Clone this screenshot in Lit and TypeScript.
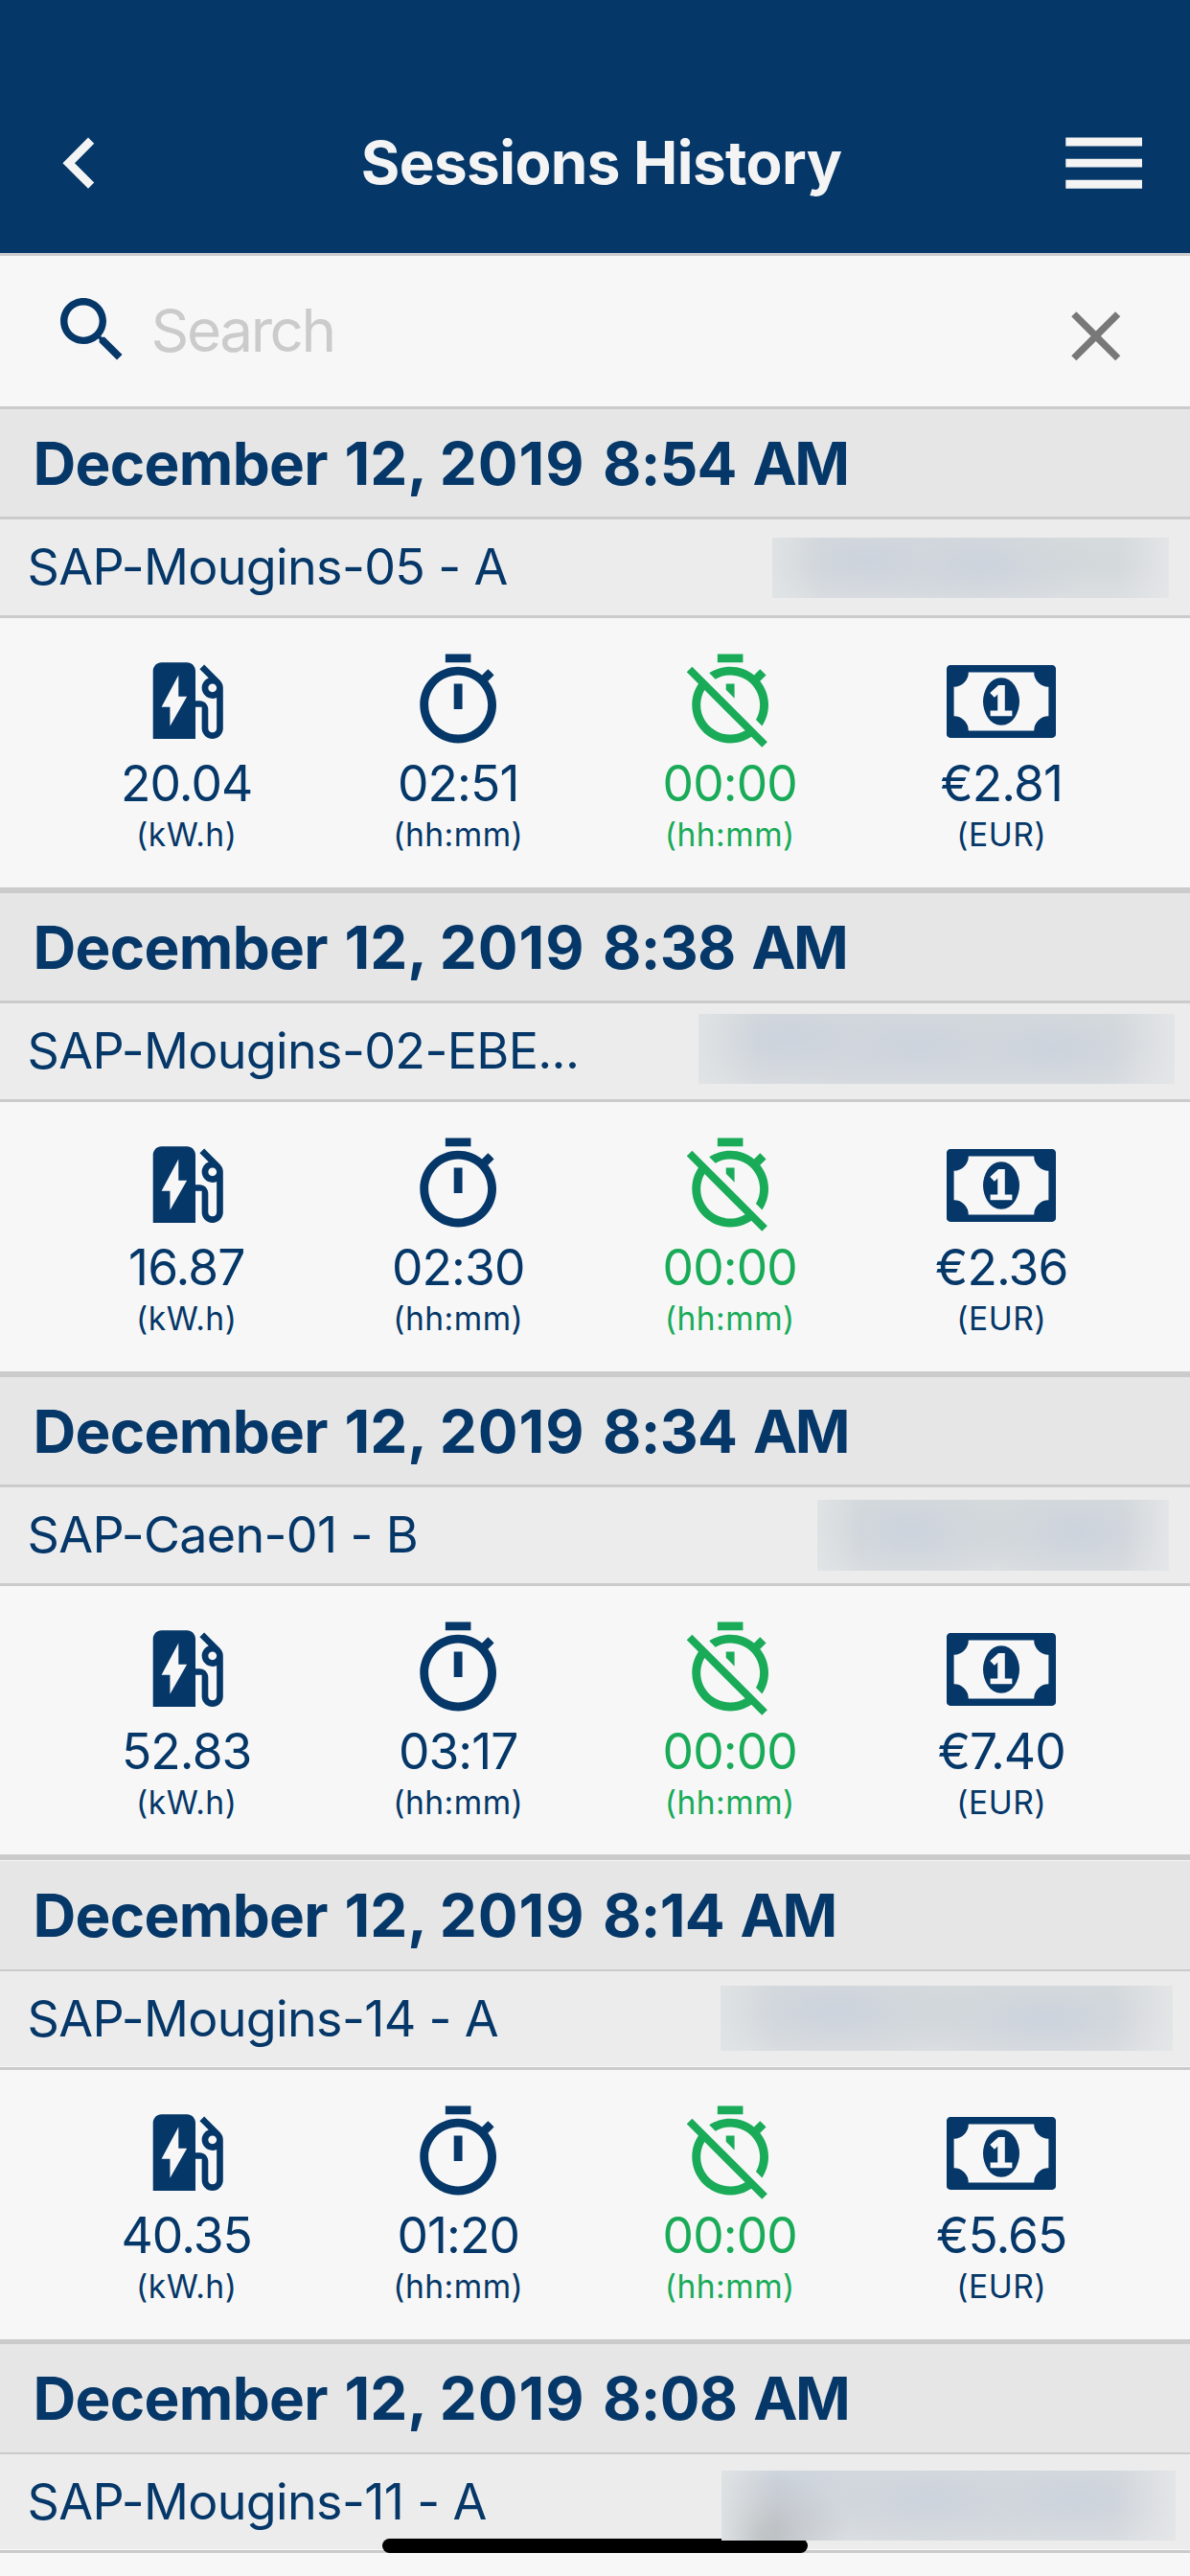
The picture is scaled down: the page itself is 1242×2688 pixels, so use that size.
import { LitElement, html, css, svg } from "lit";
import { customElement, property } from "lit/decorators.js";
import { classMap } from "lit/directives/class-map.js";
import { styleMap } from "lit/directives/style-map.js";

const ICONS = {
  back: "M15.41 7.41L14 6l-6 6 6 6 1.41-1.41L10.83 12z",
  menu: "M3 18h18v-2H3v2zm0-5h18v-2H3v2zm0-7v2h18V6H3z",
  search:
    "M15.5 14h-.79l-.28-.27C15.41 12.59 16 11.11 16 9.5 16 5.91 13.09 3 9.5 3S3 5.91 3 9.5 5.91 16 9.5 16c1.61 0 3.09-.59 4.23-1.57l.27.28v.79l5 4.99L20.49 19l-4.99-5zm-6 0C7.01 14 5 11.99 5 9.5S7.01 5 9.5 5 14 7.01 14 9.5 11.99 14 9.5 14z",
  close:
    "M19 6.41L17.59 5 12 10.59 6.41 5 5 6.41 10.59 12 5 17.59 6.41 19 12 13.41 17.59 19 19 17.59 13.41 12z",
  energy:
    "M19.77 7.23l.01-.01-3.72-3.72L15 4.56l2.11 2.11c-.94.36-1.61 1.26-1.61 2.33 0 1.38 1.12 2.5 2.5 2.5.36 0 .69-.08 1-.21v7.21c0 .55-.45 1-1 1s-1-.45-1-1V14c0-1.1-.9-2-2-2h-1V5c0-1.1-.9-2-2-2H6c-1.1 0-2 .9-2 2v16h10v-7.5h1.5v5c0 1.38 1.12 2.5 2.5 2.5s2.5-1.12 2.5-2.5V9c0-.69-.28-1.32-.73-1.77zM18 10c-.55 0-1-.45-1-1s.45-1 1-1 1 .45 1 1-.45 1-1 1zM8 18v-4.5H6L10 6v5h2l-4 7z",
  timer:
    "M15 1H9v2h6V1zm-4 13h2V8h-2v6zm8.03-6.61l1.42-1.42c-.43-.51-.9-.99-1.41-1.41l-1.42 1.42C16.07 4.74 14.12 4 12 4c-4.97 0-9 4.03-9 9s4.02 9 9 9 9-4.03 9-9c0-2.12-.74-4.07-1.97-5.61zM12 20c-3.87 0-7-3.13-7-7s3.13-7 7-7 7 3.13 7 7-3.13 7-7 7z",
  timerOff:
    "M19.04 4.55l-1.42 1.42C16.07 4.74 14.12 4 12 4c-1.83 0-3.53.55-4.95 1.48l1.46 1.46C9.53 6.35 10.73 6 12 6c3.87 0 7 3.13 7 7 0 1.27-.35 2.47-.94 3.49l1.45 1.45C20.45 16.53 21 14.83 21 13c0-2.12-.74-4.07-1.97-5.61l1.42-1.42-1.41-1.42zM15 1H9v2h6V1zm-4 8.44l2 2V8h-2v1.44zM3.02 4L1.75 5.27 4.5 8.03C3.55 9.45 3 11.16 3 13c0 4.97 4.02 9 9 9 1.84 0 3.55-.55 4.98-1.5l2.5 2.5 1.27-1.27-7.71-7.71L3.02 4zM12 20c-3.87 0-7-3.13-7-7 0-1.28.35-2.48.95-3.52l9.56 9.56c-1.03.61-2.23.96-3.51.96z",
  money:
    "M768 1152h384v-96h-128v-448h-114l-148 137 77 80q42-37 55-57h2v288h-128v96zm512-256q0 70-21 142t-59.5 134-101.5 101-138 39-138-39-101.5-101-59.5-134-21-142 21-142 59.5-134 101.5-101 138-39 138 39 101.5 101 59.5 134 21 142zm512 256v-512q-106 0-181-75t-75-181h-1152q0 106-75 181t-181 75v512q106 0 181 75t75 181h1152q0-106 75-181t181-75zm128-832v1152q0 26-19 45t-45 19h-1792q-26 0-45-19t-19-45v-1152q0-26 19-45t45-19h1792q26 0 45 19t19 45z",
};

type IconName = keyof typeof ICONS;

/** Blurred-out user name: its box within the row and the centres of its darker spots, in percent. */
interface Mask {
  left: number;
  right: number;
  top: number;
  height: number;
  spots: [number, number][];
  shadow?: boolean;
}

interface Session {
  day: string;
  year: string;
  time: string;
  station: string;
  energy: string;
  duration: string;
  idle: string;
  price: string;
  mask: Mask;
  snap: string;
}

const SESSIONS: Session[] = [
  { day: "12,", year: "2019", time: "8:54", station: "SAP-Mougins-05 - A", energy: "20.04", duration: "02:51", idle: "00:00", price: "€2.81", snap: "", mask: { left: 806, right: 1220, top: 19, height: 63, spots: [[24, 38], [52, 45]] } },
  { day: "12,", year: "2019", time: "8:38", station: "SAP-Mougins-02-EBE...", energy: "16.87", duration: "02:30", idle: "00:00", price: "€2.36", snap: "", mask: { left: 729, right: 1226, top: 11, height: 73, spots: [[19, 35], [45, 47], [74, 50]] } },
  { day: "12,", year: "2019", time: "8:34", station: "SAP-Caen-01 - B", energy: "52.83", duration: "03:17", idle: "00:00", price: "€7.40", snap: "gap", mask: { left: 853, right: 1220, top: 13, height: 74, spots: [[27, 45], [74, 45]] } },
  { day: "12,", year: "2019", time: "8:14", station: "SAP-Mougins-14 - A", energy: "40.35", duration: "01:20", idle: "00:00", price: "€5.65", snap: "thin", mask: { left: 752, right: 1224, top: 15, height: 68, spots: [[26, 38], [72, 52]] } },
  { day: "12,", year: "2019", time: "8:08", station: "SAP-Mougins-11 - A", energy: "", duration: "", idle: "", price: "", snap: "last", mask: { left: 753, right: 1227, top: 17, height: 73, spots: [[13, 15], [46, 42], [78, 40]], shadow: true } },
];

@customElement("app-icon")
class AppIcon extends LitElement {
  @property() name: IconName = "menu";

  static styles = css`
    :host {
      display: block;
      flex: none;
    }
    .glyph {
      display: block;
      width: 100%;
      height: 100%;
      fill: currentColor;
    }
  `;

  render() {
    const box = this.name === "money" ? "0 256 1920 1280" : "0 0 24 24";
    return html`<svg class="glyph" viewBox=${box}>${svg`<path d=${ICONS[this.name]}></path>`}</svg>`;
  }
}

@customElement("session-metric")
class SessionMetric extends LitElement {
  @property() icon: IconName = "timer";
  @property() value = "";
  @property() unit = "";

  static styles = css`
    :host {
      display: flex;
      flex-direction: column;
      align-items: center;
    }
    .picture {
      height: 107px;
      display: flex;
      align-items: center;
      justify-content: center;
    }
    .standard {
      width: 106.3px;
      height: 106.3px;
    }
    .money {
      width: 114px;
      height: 76px;
    }
    .value {
      margin-top: 1px;
      font-size: 51.5px;
      line-height: 62px;
      white-space: nowrap;
      letter-spacing: -0.9px;
    }
    .unit {
      font-size: 33.6px;
      line-height: 40px;
      margin-top: 3px;
      white-space: nowrap;
      letter-spacing: 0.5px;
    }
  `;

  render() {
    return html`
      <div class="picture">
        <app-icon class=${this.icon === "money" ? "money" : "standard"} .name=${this.icon}></app-icon>
      </div>
      <div class="value">${this.value}</div>
      <div class="unit">${this.unit}</div>
    `;
  }
}

@customElement("session-card")
class SessionCard extends LitElement {
  @property({ attribute: false }) session!: Session;

  static styles = css`
    :host {
      display: block;
    }
    .card {
      box-sizing: border-box;
      height: 505px;
      border-bottom: 6px solid #cbcbcb;
    }
    .card.gap {
      height: 504px;
      margin-bottom: 1px;
    }
    .card.thin {
      height: 504px;
      border-bottom-width: 5px;
    }
    .date {
      box-sizing: border-box;
      height: 115px;
      padding-left: 34.5px;
      border-bottom: 3px solid #cbcbcb;
      background: #e6e6e6;
      font-size: 62px;
      font-weight: 700;
      line-height: 113px;
      white-space: nowrap;
    }
    .thin .date,
    .last .date {
      border-bottom-width: 2px;
    }
    .month {
      letter-spacing: -0.7px;
      margin-right: 3px;
    }
    .year {
      letter-spacing: 0.9px;
      margin-right: 4px;
    }
    .time {
      letter-spacing: -0.7px;
      margin-right: 2px;
    }
    .meridiem {
      letter-spacing: -2.5px;
    }
    .place {
      box-sizing: border-box;
      height: 103px;
      padding-left: 28.5px;
      display: flex;
      align-items: flex-start;
      justify-content: space-between;
      border-bottom: 3px solid #cbcbcb;
      background: #ececec;
    }
    .thin .place,
    .last .place {
      box-shadow: inset 0 -1px 0 #f7f7f7;
    }
    .station {
      font-size: 52px;
      line-height: 100px;
      letter-spacing: -0.65px;
      white-space: nowrap;
    }
    .mask {
      position: relative;
      z-index: 2;
    }
    .metrics {
      display: grid;
      grid-template-columns: repeat(4, 283.5px);
      padding: 33px 55px 0 53px;
    }
    .idle {
      color: #19ab58;
    }
  `;

  private maskStyle(m: Mask) {
    const layers = m.spots.map(
      ([x, y]) => `radial-gradient(ellipse 30% 85% at ${x}% ${y}%, rgb(205 211 221), rgb(208 213 221 / 0.6) 45%, rgb(211 216 220 / 0))`
    );
    if (m.shadow) {
      layers.unshift("radial-gradient(ellipse 20% 95% at 8% 92%, rgb(182 186 188), rgb(188 192 198 / 0.6) 45%, rgb(205 209 216 / 0))");
    }
    layers.unshift("linear-gradient(90deg, rgb(226 229 230 / 0.8), rgb(226 229 230 / 0) 12%, rgb(226 229 230 / 0) 87%, rgb(229 230 232 / 0.9))");
    layers.push("linear-gradient(180deg, rgb(213 218 220), rgb(211 216 219) 45%, rgb(219 223 226))");
    return {
      width: `${m.right - m.left}px`,
      height: `${m.height}px`,
      marginTop: `${m.top}px`,
      marginRight: `${1242 - m.right}px`,
      background: layers.join(","),
    };
  }

  render() {
    const s = this.session;
    return html`
      <div class=${classMap({ card: true, gap: s.snap === "gap", thin: s.snap === "thin", last: s.snap === "last" })}>
        <div class="date"><span class="month">December</span> <span>${s.day}</span> <span class="year">${s.year}</span> <span class="time">${s.time}</span> <span class="meridiem">AM</span></div>
        <div class="place">
          <div class="station">${s.station}</div>
          <div class="mask" style=${styleMap(this.maskStyle(s.mask))}></div>
        </div>
        ${s.energy
          ? html`<div class="metrics">
              <session-metric icon="energy" .value=${s.energy} unit="(kW.h)"></session-metric>
              <session-metric icon="timer" .value=${s.duration} unit="(hh:mm)"></session-metric>
              <session-metric class="idle" icon="timerOff" .value=${s.idle} unit="(hh:mm)"></session-metric>
              <session-metric icon="money" .value=${s.price} unit="(EUR)"></session-metric>
            </div>`
          : ""}
      </div>
    `;
  }
}

@customElement("app-root")
class AppRoot extends LitElement {
  static styles = css`
    :host {
      display: block;
      position: relative;
      box-sizing: border-box;
      width: 1242px;
      height: 2688px;
      overflow: hidden;
      background: #f7f7f7;
      color: #053768;
      font-family: Inter, "Liberation Sans", sans-serif;
    }
    .header {
      box-sizing: border-box;
      height: 267px;
      padding: 77px 37px 0 30px;
      display: flex;
      align-items: center;
      border-bottom: 3px solid #cbcbcb;
      background: #053768;
      color: #f4f4f4;
    }
    .bar-icon {
      width: 106.3px;
      height: 106.3px;
    }
    .title {
      flex: 1;
      margin: -2px 0 0;
      padding-left: 20px;
      text-align: center;
      font-size: 62px;
      font-weight: 700;
      line-height: 76px;
      letter-spacing: -0.6px;
      white-space: nowrap;
    }
    .search {
      box-sizing: border-box;
      height: 160px;
      padding: 0 55px 0 52px;
      display: flex;
      align-items: center;
      border-bottom: 3px solid #cbcbcb;
    }
    .search-icon {
      width: 88.5px;
      height: 88.5px;
      margin-top: -2px;
    }
    .placeholder {
      flex: 1;
      margin-top: -2px;
      padding-left: 17px;
      font-size: 62px;
      line-height: 76px;
      letter-spacing: -2.4px;
      color: #cbcbcb;
    }
    .clear-icon {
      width: 87.5px;
      height: 87.5px;
      margin-top: 10px;
      color: #787878;
    }
    .home-indicator {
      position: absolute;
      left: 399px;
      top: 2649px;
      width: 444px;
      height: 15px;
      border-radius: 8px;
      background: #000;
      z-index: 1;
    }
  `;

  render() {
    return html`
      <div class="header">
        <app-icon class="bar-icon" name="back"></app-icon>
        <h1 class="title">Sessions History</h1>
        <app-icon class="bar-icon" name="menu"></app-icon>
      </div>
      <div class="search">
        <app-icon class="search-icon" name="search"></app-icon>
        <div class="placeholder">Search</div>
        <app-icon class="clear-icon" name="close"></app-icon>
      </div>
      ${SESSIONS.map((s) => html`<session-card .session=${s}></session-card>`)}
      <div class="home-indicator"></div>
    `;
  }
}
